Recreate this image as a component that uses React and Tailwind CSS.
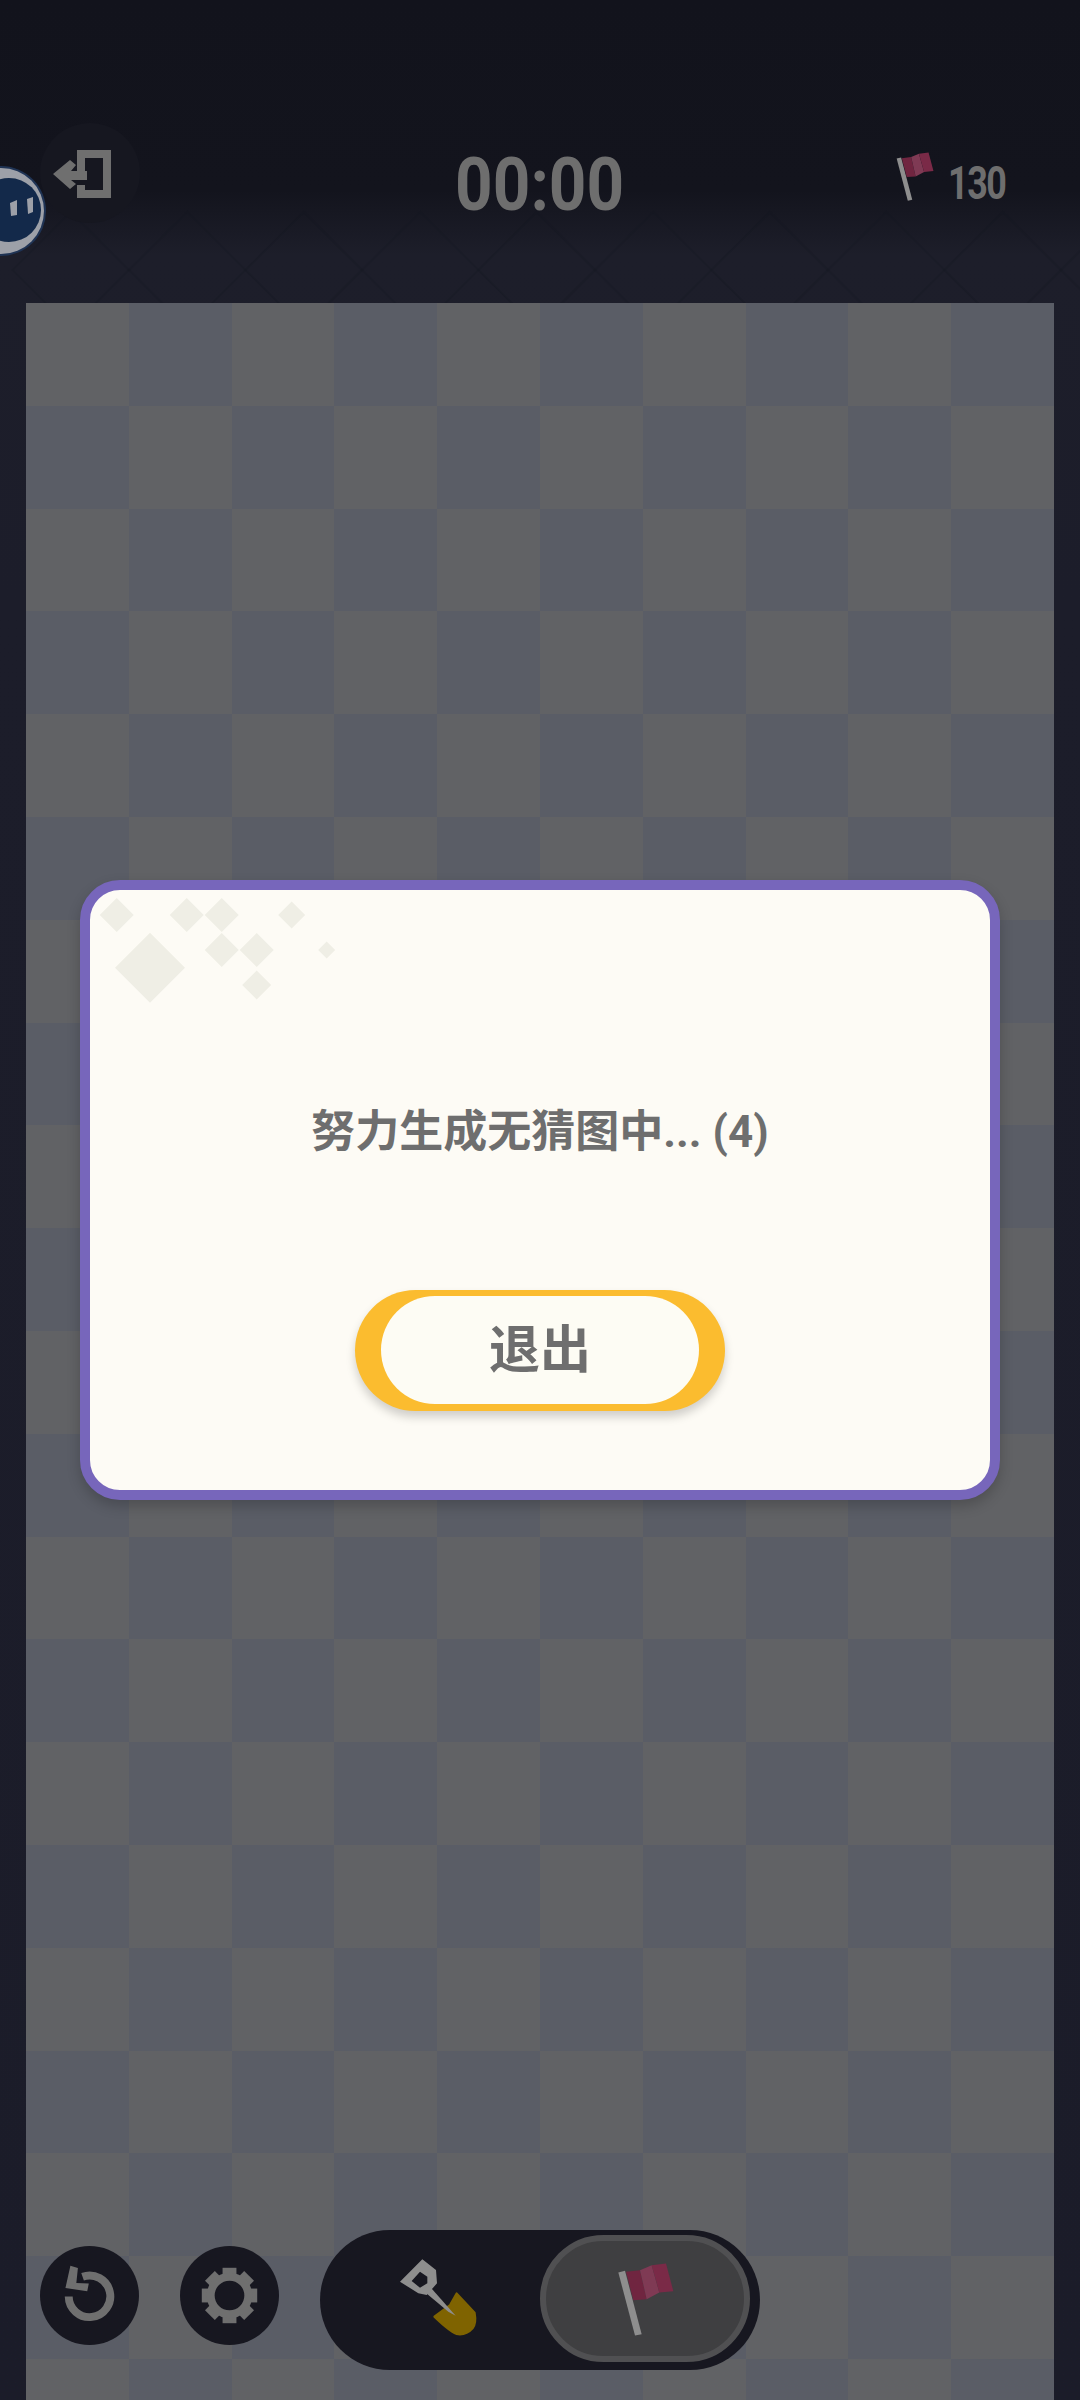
const LATIN = "font-['Roboto','Noto_Sans_CJK_SC',sans-serif]";

function Flag({ className }) {
  return (
    <svg viewBox="900 160 210 260" className={className}>
      <polygon points="925,212 945,207 995,397 975,401" fill="#8e8e8e" />
      <polygon points="948,210 990,205 1010,292 970,295" fill="#702540" />
      <polygon points="990,205 1025,190 1048,272 1010,292" fill="#7f3a54" />
      <polygon points="1025,190 1068,185 1090,268 1048,272" fill="#7a2a47" />
    </svg>
  );
}

function ExitIcon() {
  return (
    <svg viewBox="40 123 100 100" className="w-[100px] h-[100px]">
      <circle cx="90" cy="173" r="50" fill="#161720" />
      <path d="M77 150H111V198H77V185H85V190H103V158H85V171H77Z" fill="#6f6f6f" />
      <path d="M87 171H71L76 165L70 160L53 174L70 189L76 184L71 180H87Z" fill="#6f6f6f" />
    </svg>
  );
}

function Robot() {
  return (
    <svg viewBox="0 160 50 100" className="absolute left-0 top-[160px] w-[50px] h-[100px]">
      <circle cx="1" cy="211" r="45" fill="#1f3354" />
      <circle cx="1" cy="211" r="43" fill="#9da0a8" />
      <circle cx="9" cy="210" r="32" fill="#13294a" />
      <polygon points="10,203 17,200 17,215 11,216" fill="#9da0a8" />
      <polygon points="27,199 33,197 33,212 28,214" fill="#9da0a8" />
    </svg>
  );
}

function ReloadIcon() {
  return (
    <svg viewBox="0 0 100 100" className="w-[99px] h-[99px]">
      <path d="M43 31A21 21 0 1 1 29 51" fill="none" stroke="#6f6f6f" strokeWidth="8" />
      <polygon points="30.7,20 38.3,22.3 36.7,37.3 49.3,38 47.7,45.7 25.7,42.3" fill="#6f6f6f" />
    </svg>
  );
}

function GearIcon() {
  const angles = [0, 45, 90, 135, 180, 225, 270, 315];
  return (
    <svg viewBox="0 0 100 100" className="w-[99px] h-[99px]">
      {angles.map((a) => (
        <rect key={a} x="43" y="22" width="14" height="12" fill="#6f6f6f" transform={`rotate(${a} 50 50)`} />
      ))}
      <circle cx="50" cy="50" r="19" fill="none" stroke="#6f6f6f" strokeWidth="8" />
    </svg>
  );
}

function Shovel() {
  return (
    <svg viewBox="240 150 300 300" className="w-[100px] h-[100px]">
      <path d="M440 280L494 338Q500 370 488 385Q470 405 445 403Q425 400 373 350L420 315Z" fill="#7f6300" strokeLinejoin="round" stroke="#7f6300" strokeWidth="6" />
      <path d="M340 272L358 258L437 347L415 335Z" fill="#8e8e8e" />
      <path fillRule="evenodd" d="M337 178L378 210L381 250L350 285L325 280L270 245ZM330 215L305 243L330 263L352 250L352 230Z" fill="#8e8e8e" />
    </svg>
  );
}

const DIAMONDS = [
  [116.7, 915, 17], [186.7, 915, 17], [221.7, 915, 17], [291.7, 915, 13.5], [150, 967.7, 35],
  [221.7, 950, 17], [256.7, 950, 17], [326.7, 950, 8.5], [256.7, 985, 14.5],
];

function Diamonds() {
  return (
    <svg viewBox="90 890 260 120" className="absolute left-0 top-0 w-[260px] h-[120px]">
      {DIAMONDS.map(([x, y, r]) => (
        <polygon key={`${x}-${y}`} points={`${x},${y - r} ${x + r},${y} ${x},${y + r} ${x - r},${y}`} fill="#efeee5" />
      ))}
    </svg>
  );
}

function BackdropPattern() {
  const xs = Array.from({ length: 11 }, (_, i) => 12.5 + i * 116.5);
  return (
    <svg viewBox="0 210 1080 93" className="absolute left-0 top-[210px] w-[1080px] h-[93px]">
      {xs.map((x) => (
        <path key={x} d={`M${x} 270L${x + 58.25} 212L${x + 116.5} 270L${x + 58.25} 328Z`} fill="none" stroke="#14151e" strokeOpacity="0.22" strokeWidth="2" />
      ))}
    </svg>
  );
}

const CELLS = Array.from({ length: 210 }, (_, i) => (Math.floor(i / 10) + i % 10) % 2 === 0);

export default function App() {
  return (
    <div className="relative w-[1080px] h-[2400px] overflow-hidden flex flex-col bg-[linear-gradient(180deg,#12131c_0px,#13141d_190px,#1d1e2a_255px,#1c1d2a_600px,#1b1c29_2400px)]">
      <BackdropPattern />
      <Robot />

      <header className={`relative h-[303px] shrink-0 grid grid-cols-[1fr_auto_1fr] items-start px-[40px] pt-[127px] text-[#6e6e6e] ${LATIN}`}>
        <div className="-mt-[4px]"><ExitIcon /></div>
        <div className="text-[75px] leading-[75px] mt-[20px] font-bold tabular-nums scale-x-[0.875]">00:00</div>
        <div className="flex justify-end items-start pr-[35px]">
          <Flag className="w-[47px] h-[58px] mt-[20px] mr-[-6px]" />
          <span className="text-[46px] leading-[46px] mt-[33px] font-bold tracking-[-2px] origin-right scale-x-[0.78]">130</span>
        </div>
      </header>

      <main className="relative mx-[26px] grid grid-cols-10 auto-rows-[102.8px] shrink-0">
        {CELLS.map((light, i) => (
          <div key={i} className={light ? "bg-[#616265]" : "bg-[#5a5d66]"} />
        ))}
      </main>

      <div className="absolute left-[40px] top-[2230px] flex items-start gap-[41px]">
        <div className="mt-[16px] w-[99px] h-[99px] rounded-full bg-[#171720]"><ReloadIcon /></div>
        <div className="mt-[16px] w-[99px] h-[99px] rounded-full bg-[#171720]"><GearIcon /></div>
        <div className="w-[440px] h-[140px] rounded-full bg-[#171720] flex items-center pr-[10px] pb-[3px]">
          <div className="w-[220px] flex justify-center pl-[20px] pt-[3px]"><Shovel /></div>
          <div className="w-[210px] h-[127px] rounded-full bg-[#3f3f41] border-[6px] border-[#505052] flex items-center justify-center">
            <Flag className="w-[70px] h-[87px]" />
          </div>
        </div>
      </div>

      <div className="absolute inset-0 flex justify-center items-start pt-[880px]">
        <div className={`relative w-[920px] h-[620px] rounded-[40px] border-[10px] border-[#7766bb] bg-[#fdfbf5] shadow-[0_6px_14px_rgba(0,0,0,0.2)] flex flex-col items-center overflow-hidden ${LATIN}`}>
          <Diamonds />
          <p className="mt-[212px] text-[44px] leading-[60px] font-bold text-[#6e6e6e]">努力生成无猜图中... (4)</p>
          <button className="mt-[128px] w-[370px] h-[121px] rounded-full bg-[#fbbc2f] shadow-[0_6px_10px_rgba(0,0,0,0.18)] flex items-start justify-center pt-[6px]">
            <span className="w-[318px] h-[108px] rounded-full bg-[#fdfcf4] flex items-center justify-center pt-[2px] text-[51px] font-bold text-[#6e6e6e]">退出</span>
          </button>
        </div>
      </div>
    </div>
  );
}
